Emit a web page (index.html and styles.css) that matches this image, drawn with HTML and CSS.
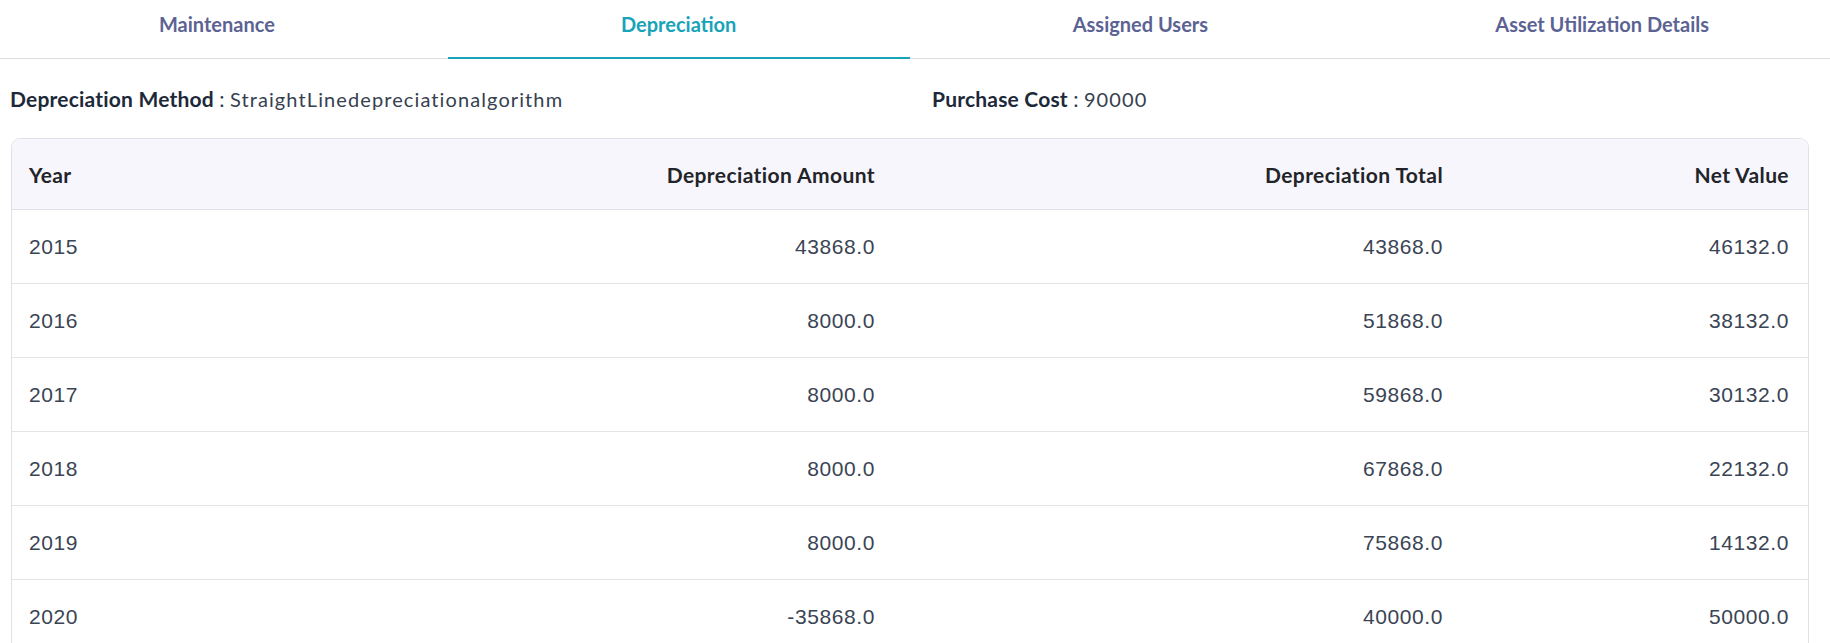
FILE: index.html
```html
<!DOCTYPE html>
<html lang="en">
<head>
<meta charset="utf-8">
<title>Depreciation</title>
<link rel="stylesheet" href="styles.css">
</head>
<body>
<div class="page">
  <nav class="tabs">
    <div class="tab">Maintenance</div>
    <div class="tab active">Depreciation</div>
    <div class="tab">Assigned Users</div>
    <div class="tab">Asset Utilization Details</div>
  </nav>
  <section class="content">
    <div class="info">
      <div class="info-item"><span class="label">Depreciation Method</span> : <span class="value">StraightLinedepreciationalgorithm</span></div>
      <div class="info-item"><span class="label">Purchase Cost</span> : <span class="value">90000</span></div>
    </div>
    <div class="card">
      <table class="dep-table">
        <colgroup>
          <col class="c1"><col class="c2"><col class="c3"><col class="c4">
        </colgroup>
        <thead>
          <tr><th class="left">Year</th><th>Depreciation Amount</th><th>Depreciation Total</th><th>Net Value</th></tr>
        </thead>
        <tbody>
          <tr><td class="left">2015</td><td>43868.0</td><td>43868.0</td><td>46132.0</td></tr>
          <tr><td class="left">2016</td><td>8000.0</td><td>51868.0</td><td>38132.0</td></tr>
          <tr><td class="left">2017</td><td>8000.0</td><td>59868.0</td><td>30132.0</td></tr>
          <tr><td class="left">2018</td><td>8000.0</td><td>67868.0</td><td>22132.0</td></tr>
          <tr><td class="left">2019</td><td>8000.0</td><td>75868.0</td><td>14132.0</td></tr>
          <tr><td class="left">2020</td><td>-35868.0</td><td>40000.0</td><td>50000.0</td></tr>
        </tbody>
      </table>
    </div>
  </section>
</div>
</body>
</html>
```

FILE: styles.css
```css
html, body {
  margin: 0;
  padding: 0;
  background: #ffffff;
  overflow: hidden;
}

.page {
  width: 1830px;
  overflow: hidden;
  font-family: "Lato", "Liberation Sans", sans-serif;
}

.tabs {
  display: flex;
  height: 58px;
  margin: 0 -3px 0 -14px;
  border-bottom: 1px solid #dedee2;
}

.tab {
  flex: 1 1 0;
  box-sizing: border-box;
  height: 59px;
  padding-top: 12px;
  text-align: center;
  font-size: 20px;
  line-height: 24px;
  font-weight: 700;
  color: #5c6394;
}

.tab.active {
  color: #18a3b9;
  border-bottom: 2px solid #18a3b9;
}

.content {
  padding: 28px 21px 0 10px;
}

.info {
  display: grid;
  grid-template-columns: 922px 1fr;
  font-size: 21px;
  line-height: 24px;
  color: #2f3a4b;
}

.label {
  font-weight: 700;
  letter-spacing: 0.2px;
  color: #1d2939;
}

.value {
  font-size: 20px;
  letter-spacing: 1.1px;
  color: #36404f;
}

.card {
  margin: 27px 0 0 1px;
  border: 1px solid #e1e1e8;
  border-radius: 9px;
  overflow: hidden;
}

.dep-table {
  width: 100%;
  border-collapse: collapse;
  table-layout: fixed;
}

.c1 { width: 300px; }
.c2 { width: 582px; }
.c3 { width: 568px; }
.c4 { width: 346px; }

.dep-table th {
  height: 70px;
  padding: 0 19px 0 17px;
  background: #f7f6fd;
  border-bottom: 1px solid #e1e1e8;
  text-align: right;
  font-size: 21px;
  font-weight: 700;
  letter-spacing: 0.4px;
  color: #222428;
  vertical-align: middle;
}

.dep-table td {
  height: 73px;
  padding: 0 19px 0 17px;
  border-bottom: 1px solid #e3e3e8;
  text-align: right;
  font-family: "Liberation Sans", Arial, sans-serif;
  font-size: 21px;
  letter-spacing: 0.6px;
  color: #3a4454;
  vertical-align: middle;
}

.dep-table .left {
  text-align: left;
}
```
